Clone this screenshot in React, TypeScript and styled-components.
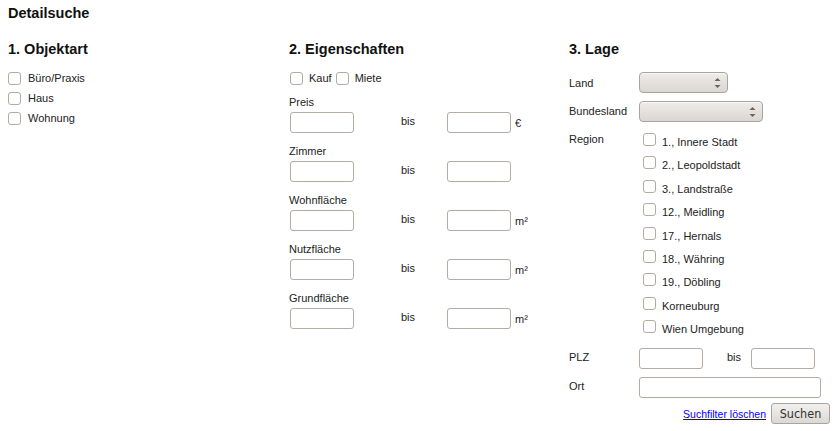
import React from "react";
import styled, { createGlobalStyle } from "styled-components";

const GlobalStyle = createGlobalStyle`
  html, body { margin: 0; padding: 0; background: #fff; }
  body { padding: 0 8px; font-family: "Liberation Sans", Arial, sans-serif; font-size: 11px; color: #222; }
`;

const Page = styled.div`
  width: 821px;
`;

const Title = styled.h1`
  margin: 0;
  padding-top: 4px;
  font-size: 14.5px;
  line-height: 18px;
  font-weight: bold;
  color: #111;
`;

const Columns = styled.div`
  display: grid;
  grid-template-columns: 281px 280px 1fr;
  margin-top: 18px;
`;

const Column = styled.section`
  display: flex;
  flex-direction: column;
  min-width: 0;
`;

const Heading = styled.h2`
  margin: 0 0 10px 0;
  font-size: 14.5px;
  line-height: 18px;
  font-weight: bold;
  color: #111;
`;

const Box = styled.input.attrs({ type: "checkbox" })`
  appearance: none;
  -webkit-appearance: none;
  margin: 0;
  width: 13px;
  height: 13px;
  border: 1px solid #b3aba2;
  border-radius: 3px;
  background: #fff;
  box-sizing: border-box;
  flex: none;
`;

const CheckRow = styled.label`
  display: flex;
  align-items: center;
  gap: 7px;
  height: 20px;
`;

const InlineChecks = styled.div`
  display: flex;
  align-items: center;
  height: 20px;
  padding-left: 1px;
`;

const InlineCheck = styled.label`
  display: flex;
  align-items: center;
  gap: 6px;
  margin-right: 4px;
`;

const Field = styled.div`
  display: flex;
  flex-direction: column;
  margin-top: 7px;
  margin-bottom: 4px;
`;

const FieldLabel = styled.div`
  height: 14px;
  line-height: 14px;
  margin-bottom: 3px;
`;

const RangeRow = styled.div`
  display: grid;
  grid-template-columns: 111px 46px 64px auto;
  align-items: center;
  padding-left: 1px;
`;

const RangeBis = styled.span`
  margin-bottom: 4px;
`;

const Unit = styled.span`
  padding-left: 4px;
`;

const TextInput = styled.input<{ $w?: number }>`
  box-sizing: border-box;
  width: ${(p) => p.$w ?? 64}px;
  height: 21px;
  margin: 0;
  padding: 2px 4px;
  border: 1px solid #b5aca2;
  border-radius: 3px;
  background: #fff;
  font: inherit;
  outline: none;
`;

const FormTable = styled.div`
  display: grid;
  grid-template-columns: 70px 1fr;
`;

const RowLabel = styled.div<{ $h: number; $lift?: number }>`
  height: ${(p) => p.$h}px;
  display: flex;
  align-items: center;
  & > span {
    margin-bottom: ${(p) => (p.$lift ?? 0) * 2}px;
  }
`;

const RegionLabel = styled.div`
  height: 218px;
  padding-top: 7px;
  box-sizing: border-box;
`;

const RowValue = styled.div<{ $h: number }>`
  height: ${(p) => p.$h}px;
  display: flex;
  align-items: center;
`;

const SelectBox = styled.div<{ $w: number }>`
  box-sizing: border-box;
  width: ${(p) => p.$w}px;
  height: 21px;
  border: 1px solid #aaa49e;
  border-radius: 4px;
  background: linear-gradient(#efece9, #dad6d2);
  display: flex;
  align-items: center;
  justify-content: flex-end;
  padding-right: 6px;
  box-shadow: inset 0 1px 0 rgba(255,255,255,0.6);
`;

const RegionList = styled.div`
  height: 218px;
  display: flex;
  flex-direction: column;
`;

const RegionRow = styled.label`
  display: flex;
  align-items: flex-end;
  box-sizing: border-box;
  height: 23.4px;
  padding: 0 0 3.4px 4px;
  gap: 6px;
`;

const RegionText = styled.span`
  line-height: 13px;
  margin-bottom: -3px;
`;

const Bis = styled.span`
  box-sizing: border-box;
  width: 48px;
  padding-left: 24px;
  margin-bottom: 4px;
`;

const Actions = styled.div`
  display: flex;
  justify-content: flex-end;
  align-items: center;
  gap: 5px;
  margin-top: 1px;
  margin-right: -1px;
`;

const ResetLink = styled.a`
  color: #0000ee;
  text-decoration: underline;
  font-size: 10.5px;
`;

const Button = styled.button`
  box-sizing: border-box;
  width: 59px;
  height: 21px;
  padding: 0;
  border: 1px solid #aaa49e;
  border-radius: 3px;
  background: linear-gradient(#f2f0ee, #dcd8d4);
  font-family: "DejaVu Sans Condensed", "DejaVu Sans", sans-serif;
  font-stretch: condensed;
  font-size: 12.5px;
  color: #333;
`;

const Arrows = () => (
  <svg width="7" height="12" viewBox="0 0 7 12">
    <path d="M0.5 4 L3.5 1 L6.5 4 Z" fill="#6a6560" />
    <path d="M0.5 8 L3.5 11 L6.5 8 Z" fill="#6a6560" />
  </svg>
);

const regions = [
  "1., Innere Stadt",
  "2., Leopoldstadt",
  "3., Landstraße",
  "12., Meidling",
  "17., Hernals",
  "18., Währing",
  "19., Döbling",
  "Korneuburg",
  "Wien Umgebung",
];

const ranges: { label: string; unit: string }[] = [
  { label: "Preis", unit: "€" },
  { label: "Zimmer", unit: "" },
  { label: "Wohnfläche", unit: "m²" },
  { label: "Nutzfläche", unit: "m²" },
  { label: "Grundfläche", unit: "m²" },
];

export default function App() {
  return (
    <Page>
      <GlobalStyle />
      <Title>Detailsuche</Title>
      <Columns>
        <Column>
          <Heading>1. Objektart</Heading>
          {["Büro/Praxis", "Haus", "Wohnung"].map((t) => (
            <CheckRow key={t}>
              <Box />
              <span>{t}</span>
            </CheckRow>
          ))}
        </Column>
        <Column>
          <Heading>2. Eigenschaften</Heading>
          <InlineChecks>
            <InlineCheck>
              <Box />
              <span>Kauf</span>
            </InlineCheck>
            <InlineCheck>
              <Box />
              <span>Miete</span>
            </InlineCheck>
          </InlineChecks>
          {ranges.map((r) => (
            <Field key={r.label}>
              <FieldLabel>{r.label}</FieldLabel>
              <RangeRow>
                <TextInput />
                <RangeBis>bis</RangeBis>
                <TextInput />
                <Unit>{r.unit}</Unit>
              </RangeRow>
            </Field>
          ))}
        </Column>
        <Column>
          <Heading>3. Lage</Heading>
          <FormTable>
            <RowLabel $h={29}>
              <span>Land</span>
            </RowLabel>
            <RowValue $h={29}>
              <SelectBox $w={89}>
                <Arrows />
              </SelectBox>
            </RowValue>
            <RowLabel $h={29} $lift={1}>
              <span>Bundesland</span>
            </RowLabel>
            <RowValue $h={29}>
              <SelectBox $w={124}>
                <Arrows />
              </SelectBox>
            </RowValue>
            <RegionLabel>Region</RegionLabel>
            <RegionList>
              {regions.map((r) => (
                <RegionRow key={r}>
                  <Box />
                  <RegionText>{r}</RegionText>
                </RegionRow>
              ))}
            </RegionList>
            <RowLabel $h={29} $lift={2}>
              <span>PLZ</span>
            </RowLabel>
            <RowValue $h={29}>
              <TextInput />
              <Bis>bis</Bis>
              <TextInput />
            </RowValue>
            <RowLabel $h={29} $lift={2}>
              <span>Ort</span>
            </RowLabel>
            <RowValue $h={29}>
              <TextInput $w={182} />
            </RowValue>
          </FormTable>
          <Actions>
            <ResetLink href="#">Suchfilter löschen</ResetLink>
            <Button>Suchen</Button>
          </Actions>
        </Column>
      </Columns>
    </Page>
  );
}
